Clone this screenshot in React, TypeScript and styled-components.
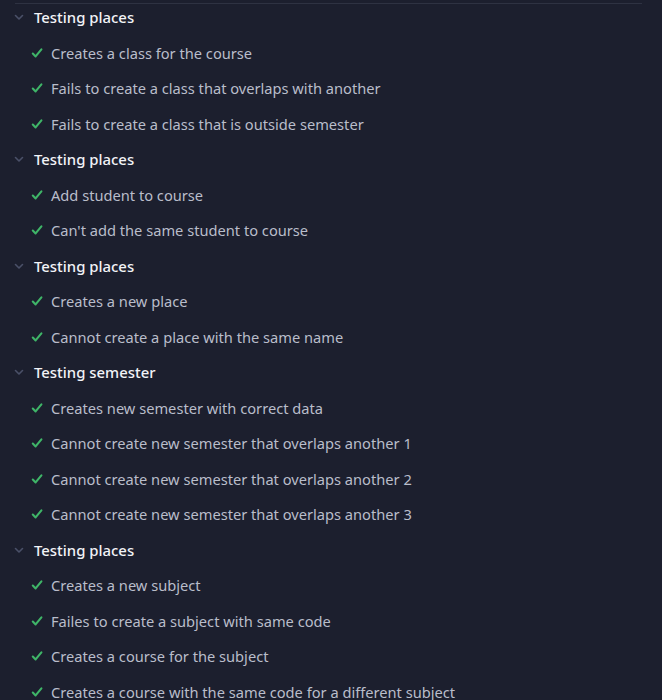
import * as React from 'react';
import styled, { createGlobalStyle } from 'styled-components';

const GlobalStyle = createGlobalStyle`
  html, body {
    margin: 0;
    padding: 0;
    background: #1c1f2e;
  }
  body {
    font-family: "Noto Sans", "Open Sans", sans-serif;
  }
`;

const Wrapper = styled.div`
  width: 662px;
  height: 700px;
  overflow: hidden;
  background: #1c1f2e;
`;
const Divider = styled.div`
  margin: 3px 20px 0 15px;
  height: 1px;
  background: #2e3242;
`;
const Group = styled.div``;
const Row = styled.div<{ $header?: boolean }>`
  display: flex;
  align-items: center;
  height: 35.5px;
  padding-left: ${(p) => (p.$header ? '13px' : '31px')};
  font-size: ${(p) => (p.$header ? '14.9px' : '14.65px')};
  color: ${(p) => (p.$header ? '#f2f3f7' : '#b9bdca')};
  font-weight: ${(p) => (p.$header ? 500 : 400)};
  white-space: nowrap;
`;
const Icon = styled.svg`
  flex: none;
  margin-right: 9px;
`;
const List = styled.div`
  margin-top: -4.75px;
`;

const Chevron = () => (
  <Icon width="12" height="12" viewBox="0 0 12 12">
    <path d="M2.5 4.5 L6 8 L9.5 4.5" fill="none" stroke="#4a5068" strokeWidth="1.6" strokeLinecap="round" strokeLinejoin="round" />
  </Icon>
);

const Check = () => (
  <Icon width="12" height="12" viewBox="0 0 12 12" style={{ marginRight: 8 }}>
    <path d="M1.8 6.6 L4.6 9.4 L10.4 2.4" fill="none" stroke="#3fb568" strokeWidth="2.1" strokeLinecap="round" strokeLinejoin="round" />
  </Icon>
);

const groups: { title: string; tests: string[] }[] = [
  {
    title: 'Testing places',
    tests: [
      'Creates a class for the course',
      'Fails to create a class that overlaps with another',
      'Fails to create a class that is outside semester',
    ],
  },
  {
    title: 'Testing places',
    tests: ['Add student to course', "Can't add the same student to course"],
  },
  {
    title: 'Testing places',
    tests: ['Creates a new place', 'Cannot create a place with the same name'],
  },
  {
    title: 'Testing semester',
    tests: [
      'Creates new semester with correct data',
      'Cannot create new semester that overlaps another 1',
      'Cannot create new semester that overlaps another 2',
      'Cannot create new semester that overlaps another 3',
    ],
  },
  {
    title: 'Testing places',
    tests: [
      'Creates a new subject',
      'Failes to create a subject with same code',
      'Creates a course for the subject',
      'Creates a course with the same code for a different subject',
    ],
  },
];

export default function App() {
  return (
    <>
      <GlobalStyle />
      <Wrapper>
        <Divider />
        <List>
          {groups.map((g, i) => (
            <Group key={i}>
              <Row $header>
                <Chevron />
                {g.title}
              </Row>
              {g.tests.map((t) => (
                <Row key={t}>
                  <Check />
                  {t}
                </Row>
              ))}
            </Group>
          ))}
        </List>
      </Wrapper>
    </>
  );
}
